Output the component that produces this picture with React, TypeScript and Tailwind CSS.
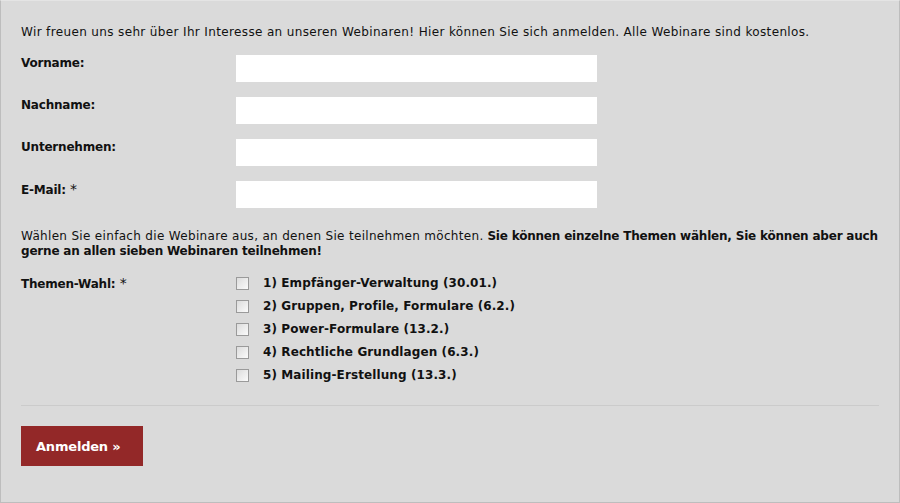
import React from 'react';

const fields = ['Vorname:', 'Nachname:', 'Unternehmen:', 'E-Mail:'];

const topics = [
  '1) Empfänger-Verwaltung (30.01.)',
  '2) Gruppen, Profile, Formulare (6.2.)',
  '3) Power-Formulare (13.2.)',
  '4) Rechtliche Grundlagen (6.3.)',
  '5) Mailing-Erstellung (13.3.)',
];

function Box() {
  return (
    <span className="block w-[13px] h-[13px] border border-[#9a9a9a] bg-gradient-to-br from-[#dcdcdc] to-[#fbfbfb] shrink-0" />
  );
}

export default function App() {
  return (
    <div
      className="w-[900px] h-[503px] bg-[#dadada] border border-[#bdbdbd] border-t-[#e4e4e4] px-5 pt-[24px] text-[#111] text-[12px] leading-[15px]"
      style={{ fontFamily: '"DejaVu Sans", Verdana, sans-serif' }}
    >
      <p className="tracking-[0.36px]">
        Wir freuen uns sehr über Ihr Interesse an unseren Webinaren! Hier können Sie sich anmelden. Alle Webinare sind kostenlos.
      </p>

      <div className="mt-[15px] flex flex-col gap-[15px]">
        {fields.map((f) => (
          <div key={f} className="flex">
            <label className="w-[215px] font-bold tracking-[-0.2px] pt-[1px]">
              {f}
              {f === 'E-Mail:' && <span className="font-normal text-[14px]"> *</span>}
            </label>
            <input className="w-[361px] h-[27px] bg-white outline-none" />
          </div>
        ))}
      </div>

      <p className="mt-[21px] whitespace-nowrap">
        <span className="tracking-[0.32px]">Wählen Sie einfach die Webinare aus, an denen Sie teilnehmen möchten.</span>{' '}
        <b className="tracking-[-0.2px]">Sie können einzelne Themen wählen, Sie können aber auch</b>
        <br />
        <b className="tracking-[-0.2px]">gerne an allen sieben Webinaren teilnehmen!</b>
      </p>

      <div className="mt-[13px] flex">
        <div className="w-[215px] font-bold tracking-[-0.2px] pt-[4px]">
          Themen-Wahl:<span className="font-normal text-[14px]"> *</span>
        </div>
        <div className="flex flex-col">
          {topics.map((t) => (
            <div key={t} className="flex items-center gap-[14px] h-[23px]">
              <Box />
              <span className="font-bold tracking-[0.1px]">{t}</span>
            </div>
          ))}
        </div>
      </div>

      <div className="mt-[18px] border-t border-[#cbcbcb]" />

      <button className="mt-[20px] w-[122px] h-[40px] bg-[#932828] text-white font-bold text-[13px] tracking-[-0.2px] text-left pl-[15px]">
        Anmelden »
      </button>
    </div>
  );
}
